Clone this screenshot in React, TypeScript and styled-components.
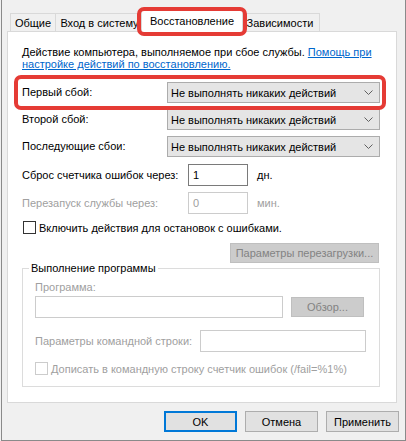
import React from "react";
import styled, { createGlobalStyle } from "styled-components";

const GlobalStyle = createGlobalStyle`
  html, body { margin: 0; padding: 0; background: #f0f0f0; }
  body {
    font-family: "Liberation Sans", Arial, sans-serif;
    font-size: 11px;
    color: #000;
  }
  * { box-sizing: border-box; }
`;

const Window = styled.div`
  width: 405px;
  height: 441px;
  margin-left: 1px;
  background: #f0f0f0;
  border-left: 1px solid #8a8a8a;
  border-right: 1px solid #8a8a8a;
  border-bottom: 1px solid #8a8a8a;
  display: flex;
  flex-direction: column;
`;

const TabStrip = styled.div`
  display: flex;
  align-items: flex-end;
  height: 22px;
  margin-top: 10px;
  padding-left: 8px;
  position: relative;
  z-index: 2;
`;

const Tab = styled.div<{ $w: number; $active?: boolean }>`
  position: relative;
  width: ${(p) => p.$w}px;
  height: ${(p) => (p.$active ? 22 : 18)}px;
  margin-bottom: ${(p) => (p.$active ? 0 : 1)}px;
  margin-left: -1px;
  background: ${(p) => (p.$active ? "#ffffff" : "#f0f0f0")};
  border: 1px solid #d9d9d9;
  border-bottom: none;
  display: flex;
  align-items: center;
  justify-content: center;
  white-space: nowrap;
  overflow: hidden;
  z-index: ${(p) => (p.$active ? 2 : 1)};
  padding-bottom: ${(p) => (p.$active ? 1 : 0)}px;
  &:first-child { margin-left: 0; }
`;

const TabWrap = styled.div`
  position: relative;
  display: flex;
  align-items: flex-end;
  margin-left: -3px;
  margin-right: -2px;
  z-index: 3;
  & > ${Tab} { margin-left: 0; }
`;

const Highlight = styled.div<{ $t: number; $l: number; $r: number; $b: number }>`
  position: absolute;
  top: ${(p) => p.$t}px;
  left: ${(p) => p.$l}px;
  right: ${(p) => p.$r}px;
  bottom: ${(p) => p.$b}px;
  border: 4px solid #e53b35;
  border-radius: 7px;
  pointer-events: none;
  z-index: 5;
`;

const Panel = styled.div`
  margin-left: 5px;
  margin-top: -1px;
  width: 390px;
  height: 372px;
  background: #ffffff;
  border: 1px solid #d9d9d9;
  padding: 14px 16px 0 14px;
  display: flex;
  flex-direction: column;
  position: relative;
  z-index: 1;
`;

const Description = styled.p`
  margin: 0;
  line-height: 12px;
  white-space: nowrap;
`;

const Link = styled.a`
  color: #0066cc;
  text-decoration: underline;
`;

const Row = styled.div<{ $mt: number; $h?: number }>`
  position: relative;
  display: flex;
  align-items: center;
  margin-top: ${(p) => p.$mt}px;
  height: ${(p) => p.$h ?? 21}px;
`;

const Label = styled.span<{ $w?: number; $disabled?: boolean }>`
  flex: none;
  width: ${(p) => (p.$w ? `${p.$w}px` : "auto")};
  color: ${(p) => (p.$disabled ? "#a0a0a0" : "#000")};
  white-space: nowrap;
  line-height: 13px;
`;

const Combo = styled.div`
  flex: none;
  width: 213px;
  height: 21px;
  background: #e5e5e5;
  border: 1px solid #acacac;
  display: flex;
  align-items: center;
  justify-content: space-between;
  padding: 0 6px 0 3px;
  white-space: nowrap;
`;

const TextBox = styled.div<{ $w: number; $h?: number; $disabled?: boolean }>`
  flex: none;
  width: ${(p) => p.$w}px;
  height: ${(p) => p.$h ?? 22}px;
  background: #ffffff;
  border: 1px solid ${(p) => (p.$disabled ? "#cccccc" : "#7a7a7a")};
  color: ${(p) => (p.$disabled ? "#a0a0a0" : "#000")};
  display: flex;
  align-items: center;
  padding-left: 4px;
`;

const Unit = styled.span<{ $disabled?: boolean }>`
  margin-left: 9px;
  color: ${(p) => (p.$disabled ? "#a0a0a0" : "#000")};
`;

const CheckRow = styled.label<{ $mt: number; $disabled?: boolean; $ml?: number }>`
  display: flex;
  align-items: center;
  height: 13px;
  margin-top: ${(p) => p.$mt}px;
  margin-left: ${(p) => p.$ml ?? 0}px;
  color: ${(p) => (p.$disabled ? "#a0a0a0" : "#000")};
  white-space: nowrap;
`;

const CheckBox = styled.span<{ $disabled?: boolean }>`
  flex: none;
  width: 13px;
  height: 13px;
  background: #fff;
  border: 1px solid ${(p) => (p.$disabled ? "#cccccc" : "#333333")};
  margin-right: 3px;
`;

const DisabledButton = styled.div<{ $w: number; $h?: number }>`
  flex: none;
  width: ${(p) => p.$w}px;
  height: ${(p) => p.$h ?? 20}px;
  background: #cccccc;
  border: 1px solid #bfbfbf;
  color: #838383;
  display: flex;
  align-items: center;
  justify-content: center;
  white-space: nowrap;
`;

const ParamsButton = styled(DisabledButton)`
  align-self: flex-end;
  margin-top: 9px;
  margin-right: 1px;
`;

const Group = styled.fieldset`
  margin: 0;
  width: 358px;
  height: 124px;
  border: 1px solid #dcdcdc;
  padding: 7px 12px 0 12px;
  display: flex;
  flex-direction: column;
`;

const Legend = styled.legend`
  padding: 0 2px;
  margin-left: -6px;
  line-height: 11px;
  color: #000;
`;

const GroupLabel = styled.div<{ $w?: number }>`
  flex: none;
  width: ${(p) => (p.$w ? `${p.$w}px` : "auto")};
  color: #a0a0a0;
  line-height: 13px;
  white-space: nowrap;
`;

const InlineRow = styled.div<{ $mt: number }>`
  display: flex;
  align-items: center;
  gap: 8px;
  margin-top: ${(p) => p.$mt}px;
`;

const Footer = styled.div`
  display: flex;
  justify-content: flex-end;
  gap: 8px;
  margin-top: 8px;
  padding-right: 6px;
`;

const Button = styled.div<{ $default?: boolean }>`
  width: 73px;
  height: 21px;
  background: #e1e1e1;
  border: ${(p) => (p.$default ? "2px solid #0078d7" : "1px solid #adadad")};
  display: flex;
  align-items: center;
  justify-content: center;
  white-space: nowrap;
`;

const Chevron = () => (
  <svg width="9" height="5" viewBox="0 0 9 5" fill="none">
    <polyline points="0.5,0.5 4.5,4.5 8.5,0.5" stroke="#606060" strokeWidth="1" />
  </svg>
);

const COMBO_TEXT = "Не выполнять никаких действий";

export default function App() {
  return (
    <>
      <GlobalStyle />
      <Window>
        <TabStrip>
          <Tab $w={46}>Общие</Tab>
          <Tab $w={89}>Вход в систему</Tab>
          <TabWrap>
            <Tab $w={102} $active>
              Восстановление
            </Tab>
            <Highlight $t={-3} $l={-4} $r={-4} $b={-4} />
          </TabWrap>
          <Tab $w={80}>Зависимости</Tab>
        </TabStrip>

        <Panel>
          <Description>
            Действие компьютера, выполняемое при сбое службы.{" "}
            <Link href="#">
              Помощь при
              <br />
              настройке действий по восстановлению.
            </Link>
          </Description>

          <Row $mt={12}>
            <Label $w={145}>Первый сбой:</Label>
            <Combo>
              {COMBO_TEXT}
              <Chevron />
            </Combo>
            <Highlight $t={-7} $l={-8} $r={-6} $b={-7} />
          </Row>
          <Row $mt={6}>
            <Label $w={145}>Второй сбой:</Label>
            <Combo>
              {COMBO_TEXT}
              <Chevron />
            </Combo>
          </Row>
          <Row $mt={6}>
            <Label $w={145}>Последующие сбои:</Label>
            <Combo>
              {COMBO_TEXT}
              <Chevron />
            </Combo>
          </Row>

          <Row $mt={7} $h={22}>
            <Label $w={166}>Сброс счетчика ошибок через:</Label>
            <TextBox $w={60}>1</TextBox>
            <Unit>дн.</Unit>
          </Row>
          <Row $mt={6} $h={22}>
            <Label $w={166} $disabled>
              Перезапуск службы через:
            </Label>
            <TextBox $w={60} $disabled>
              0
            </TextBox>
            <Unit $disabled>мин.</Unit>
          </Row>

          <CheckRow $mt={7} $ml={1}>
            <CheckBox />
            Включить действия для остановок с ошибками.
          </CheckRow>

          <ParamsButton $w={149}>Параметры перезагрузки...</ParamsButton>

          <Group>
            <Legend>Выполнение программы</Legend>
            <GroupLabel>Программа:</GroupLabel>
            <InlineRow $mt={2}>
              <TextBox $w={248} $disabled />
              <DisabledButton $w={73}>Обзор...</DisabledButton>
            </InlineRow>
            <InlineRow $mt={12}>
              <GroupLabel $w={157}>Параметры командной строки:</GroupLabel>
              <TextBox $w={166} $disabled />
            </InlineRow>
            <CheckRow $mt={10} $disabled>
              <CheckBox $disabled />
              Дописать в командную строку счетчик ошибок (/fail=%1%)
            </CheckRow>
          </Group>
        </Panel>

        <Footer>
          <Button $default>OK</Button>
          <Button>Отмена</Button>
          <Button>Применить</Button>
        </Footer>
      </Window>
    </>
  );
}
